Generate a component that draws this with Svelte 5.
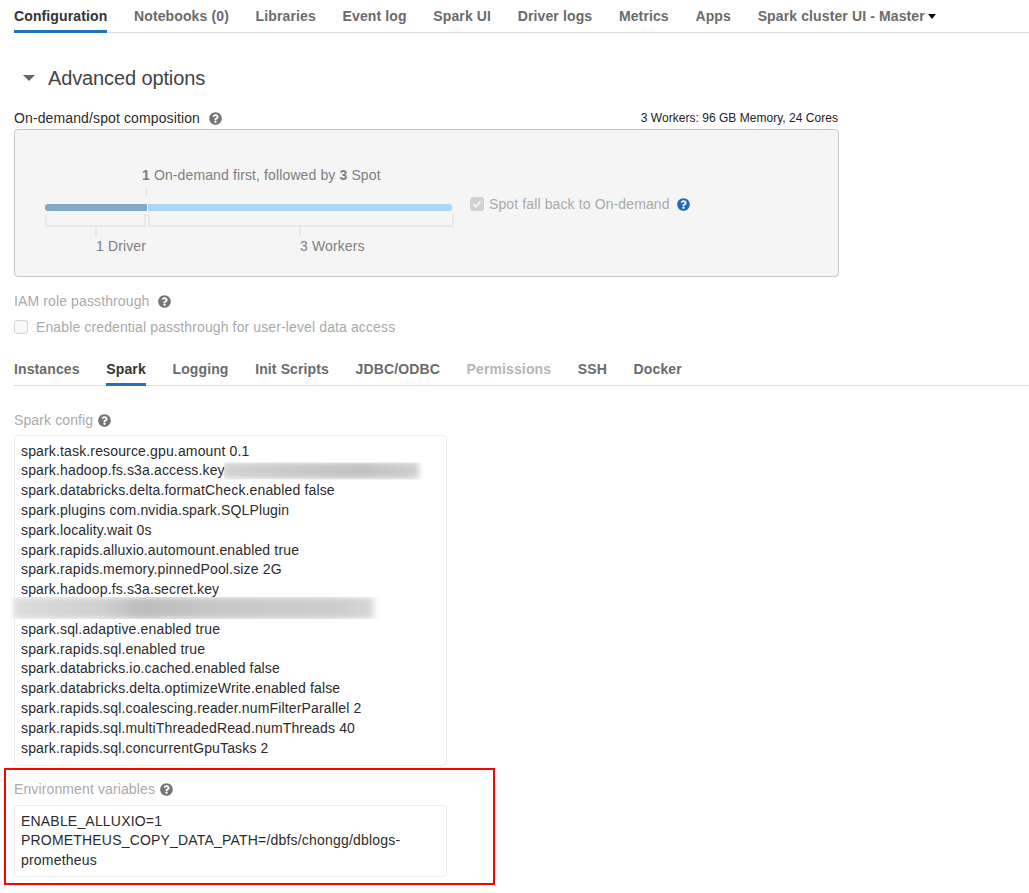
<script lang="ts">
	const helpPath =
		'M504 256c0 136.997-111.043 248-248 248S8 392.997 8 256C8 119.083 119.043 8 256 8s248 111.083 248 248zM262.655 90c-54.497 0-89.255 22.957-116.549 63.758-3.536 5.286-2.353 12.415 2.715 16.258l34.699 26.31c5.205 3.947 12.621 3.008 16.665-2.122 17.864-22.658 30.113-35.797 57.303-35.797 20.429 0 45.698 13.148 45.698 32.958 0 14.976-12.363 22.667-32.534 33.976C247.128 238.528 216 254.941 216 296v4c0 6.627 5.373 12 12 12h56c6.627 0 12-5.373 12-12v-1.333c0-28.462 83.186-29.647 83.186-106.667 0-58.002-60.165-102-116.531-102zM256 338c-25.365 0-46 20.635-46 46 0 25.364 20.635 46 46 46s46-20.636 46-46c0-25.365-20.635-46-46-46z';

	const topTabs = ['Configuration', 'Notebooks (0)', 'Libraries', 'Event log', 'Spark UI', 'Driver logs', 'Metrics', 'Apps'];
	const subTabs = ['Instances', 'Spark', 'Logging', 'Init Scripts', 'JDBC/ODBC', 'Permissions', 'SSH', 'Docker'];

	const configBefore = ['spark.task.resource.gpu.amount 0.1'];
	const configMiddle = [
		'spark.databricks.delta.formatCheck.enabled false',
		'spark.plugins com.nvidia.spark.SQLPlugin',
		'spark.locality.wait 0s',
		'spark.rapids.alluxio.automount.enabled true',
		'spark.rapids.memory.pinnedPool.size 2G',
		'spark.hadoop.fs.s3a.secret.key'
	];
	const configAfter = [
		'spark.sql.adaptive.enabled true',
		'spark.rapids.sql.enabled true',
		'spark.databricks.io.cached.enabled false',
		'spark.databricks.delta.optimizeWrite.enabled false',
		'spark.rapids.sql.coalescing.reader.numFilterParallel 2',
		'spark.rapids.sql.multiThreadedRead.numThreads 40',
		'spark.rapids.sql.concurrentGpuTasks 2'
	];
</script>

{#snippet help(kind = '')}
	<svg class="help {kind}" viewBox="0 0 512 512" aria-hidden="true"><path d={helpPath} /></svg>
{/snippet}

<div class="page">
	<nav class="tabs top">
		{#each topTabs as tab, i}
			<span class="tab" class:active={i === 0}>{tab}</span>
		{/each}
		<span class="tab">Spark cluster UI - Master <i class="caret"></i></span>
	</nav>

	<h2 class="advanced"><i class="toggle"></i>Advanced options</h2>

	<div class="composition-head">
		<label class="field-label">On-demand/spot composition {@render help('wide')}</label>
		<span class="summary">3 Workers: 96 GB Memory, 24 Cores</span>
	</div>

	<div class="panel">
		<div class="diagram">
			<div class="caption"><b>1</b> On-demand first, followed by <b>3</b> Spot</div>
			<div class="tick"></div>
			<div class="bar">
				<div class="seg driver"></div>
				<div class="seg workers"></div>
			</div>
			<div class="brackets">
				<div class="group driver-group">
					<div class="bracket"></div>
					<div class="stem"></div>
					<div class="count">1 Driver</div>
				</div>
				<div class="group worker-group">
					<div class="bracket"></div>
					<div class="stem"></div>
					<div class="count">3 Workers</div>
				</div>
			</div>
		</div>
		<div class="fallback">
			<span class="box checked">
				<svg viewBox="0 0 14 14" aria-hidden="true"><path d="M3 7.4l2.8 2.8L11 4" fill="none" stroke="#f4f4f4" stroke-width="2.2" /></svg>
			</span>
			<span class="fallback-text">Spot fall back to On-demand</span>
			{@render help('blue')}
		</div>
	</div>

	<div class="iam-label">IAM role passthrough {@render help('wide')}</div>
	<div class="iam-check">
		<span class="box"></span>
		<span>Enable credential passthrough for user-level data access</span>
	</div>

	<nav class="tabs sub">
		{#each subTabs as tab, i}
			<span class="tab" class:active={i === 1} class:off={tab === 'Permissions'}>{tab}</span>
		{/each}
	</nav>

	<div class="muted-label config-label">Spark config {@render help()}</div>
	<div class="textbox config">
		{#each configBefore as line}<div>{line}</div>{/each}
		<div class="key-line">spark.hadoop.fs.s3a.access.key<span class="smudge short"></span></div>
		{#each configMiddle as line}<div>{line}</div>{/each}
		<div class="secret-line"><span class="smudge long"></span></div>
		{#each configAfter as line}<div>{line}</div>{/each}
	</div>

	<section class="env">
		<div class="muted-label env-label">Environment variables {@render help()}</div>
		<div class="textbox env-box">
			<div>ENABLE_ALLUXIO=1</div>
			<div>PROMETHEUS_COPY_DATA_PATH=/dbfs/chongg/dblogs-prometheus</div>
		</div>
	</section>
</div>

<style>
	:global(body) {
		margin: 0;
		background: #fff;
		overflow: hidden;
	}

	.page {
		padding-left: 14px;
		font-family: 'Liberation Sans', Arial, sans-serif;
		font-size: 14px;
		line-height: 20px;
		letter-spacing: 0.12px;
		color: #333;
	}

	.tabs {
		display: flex;
		gap: 26.7px;
		border-bottom: 1px solid #ddd;
	}

	.tabs.top {
		height: 32px;
	}

	.tab {
		height: 100%;
		box-sizing: border-box;
		padding-top: 6px;
		font-weight: 700;
		color: #6b6b6b;
		white-space: nowrap;
	}

	.tab.active {
		color: #333;
		border-bottom: 3px solid #1f72bd;
		height: calc(100% + 1px);
	}

	.tab.off {
		color: #b5b5b5;
	}

	.caret {
		display: inline-block;
		margin-left: -1px;
		vertical-align: 2px;
		border-left: 4.5px solid transparent;
		border-right: 4.5px solid transparent;
		border-top: 5px solid #111;
	}

	.advanced {
		display: flex;
		align-items: center;
		margin: 32px 0 0;
		height: 26px;
		font-size: 20px;
		font-weight: 400;
		letter-spacing: -0.12px;
		color: #444;
	}

	.toggle {
		width: 0;
		height: 0;
		margin: 0 13px 0 9px;
		border-left: 6px solid transparent;
		border-right: 6px solid transparent;
		border-top: 6px solid #666;
	}

	.composition-head {
		display: flex;
		justify-content: space-between;
		align-items: center;
		width: 824px;
		height: 20px;
		margin-top: 17px;
	}

	.field-label {
		color: #2b2b2b;
	}

	.summary {
		font-size: 12px;
		letter-spacing: 0.03px;
		color: #222;
	}

	.help {
		display: inline-block;
		width: 13px;
		height: 13px;
		margin-left: 1px;
		vertical-align: -2px;
		fill: #757575;
	}

	.help.wide {
		margin-left: 5px;
	}

	.help.blue {
		fill: #1f6cb5;
		margin-left: 7px;
	}

	.panel {
		display: flex;
		box-sizing: border-box;
		width: 825px;
		height: 148px;
		margin-top: 1px;
		padding: 35px 0 0 30px;
		background: #f5f5f5;
		border: 1px solid #c8c8c8;
		border-radius: 4px;
		color: #808080;
	}

	.diagram {
		width: 409px;
	}

	.caption {
		margin-left: 97px;
		white-space: nowrap;
	}

	.tick {
		width: 1px;
		height: 8px;
		margin: 3px 0 8px 101px;
		background: #ddd;
	}

	.bar {
		display: flex;
		width: 407px;
		height: 7px;
		gap: 1px;
	}

	.seg {
		height: 100%;
	}

	.driver {
		width: 102px;
		background: #84a9c6;
		border-radius: 3px 1px 1px 3px;
	}

	.workers {
		flex: 1;
		background: #a9d7f8;
		border-radius: 1px 3px 3px 1px;
	}

	.brackets {
		display: flex;
		gap: 2px;
		margin-top: 3px;
	}

	.driver-group {
		width: 101px;
	}

	.worker-group {
		width: 306px;
	}

	.bracket {
		box-sizing: border-box;
		height: 13px;
		border: 2px solid #e8e8e8;
		border-top: 0;
	}

	.stem {
		width: 2px;
		height: 9px;
		margin-left: 50px;
		background: #e8e8e8;
	}

	.worker-group .stem {
		margin-left: 151px;
	}

	.count {
		margin-left: 51px;
		white-space: nowrap;
	}

	.worker-group .count {
		margin-left: 152px;
	}

	.fallback {
		display: flex;
		align-items: center;
		height: 20px;
		margin: 29px 0 0 16px;
		color: #aaa;
	}

	.fallback-text {
		margin-left: 5px;
	}

	.box {
		display: inline-block;
		box-sizing: border-box;
		width: 14px;
		height: 14px;
		flex: none;
		border: 1px solid #d4d4d4;
		border-radius: 3px;
		background: #f8f8f8;
	}

	.box.checked {
		background: #d2d2d2;
		border-color: #d2d2d2;
	}

	.box svg {
		display: block;
		width: 12px;
		height: 12px;
	}

	.iam-label {
		margin-top: 14px;
		color: #aaa;
	}

	.iam-check {
		display: flex;
		align-items: center;
		gap: 8px;
		margin-top: 6px;
		color: #aaa;
	}

	.tabs.sub {
		height: 32px;
		margin-top: 16px;
		gap: 26.65px;
	}

	.muted-label {
		color: #aaa;
	}

	.config-label {
		margin-top: 24px;
	}

	.textbox {
		box-sizing: border-box;
		width: 433px;
		padding: 5.6px 6px 5px;
		background: #fff;
		border: 1px solid #ececec;
		border-radius: 4px;
		color: #2b2b2b;
		line-height: 19.8px;
		letter-spacing: 0.15px;
	}

	.config {
		height: 331px;
		margin-top: 5px;
		padding-top: 5.7px;
	}

	.key-line {
		position: relative;
	}

	.secret-line {
		position: relative;
		height: 19.8px;
	}

	.smudge {
		position: absolute;
		filter: blur(3px);
	}

	.smudge.short {
		left: 202px;
		top: 1px;
		width: 196px;
		height: 17px;
		background: linear-gradient(90deg, #d2d2d2, #c6c6c6 45%, #c0c0c0 70%, #cfcfcf);
		clip-path: inset(0 -14px 0 1px);
	}

	.smudge.long {
		left: -7px;
		top: -3px;
		width: 360px;
		height: 22px;
		background: linear-gradient(90deg, #dcdcdc, #cfcfcf 25%, #bdbdbd 35%, #c8c8c8 60%, #cdcdcd 90%, #d8d8d8);
		clip-path: inset(0 -14px 0 -14px);
	}

	.env {
		box-sizing: border-box;
		width: 491px;
		height: 117px;
		margin: 2px 0 0 -10px;
		padding: 9px 0 0 8px;
		border: 2px solid #f00;
	}

	.env-box {
		margin-top: 6px;
		height: 72px;
		letter-spacing: 0.19px;
	}
</style>
